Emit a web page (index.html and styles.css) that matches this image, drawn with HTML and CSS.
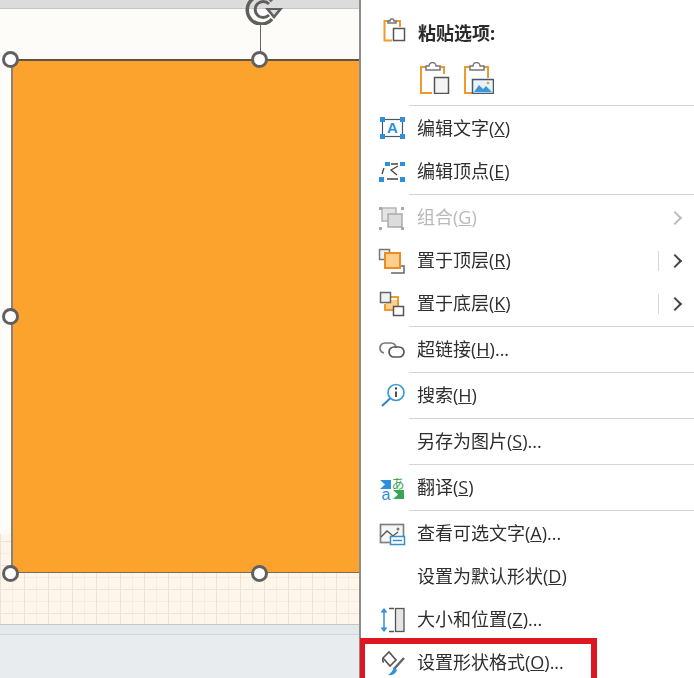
FILE: index.html
```html
<!DOCTYPE html>
<html>
    <head>
        <meta charset="UTF-8">
        <title>设置形状格式</title>
        <link rel="stylesheet" href="styles.css">
    </head>
    <body>
        <div class="canvas">
            <div class="top-strip"></div>
            <div class="slide">
                <div class="shape"></div>
            </div>
            <div class="workspace"></div>

            <svg class="rotate" width="42" height="30" viewBox="0 0 42 30">
                <path d="M28 6 A14 14 0 1 0 28 24" fill="none" stroke="#5f5f5f" stroke-width="3.500"/>
                <path d="M25 9 A8 8 0 1 0 25 20" fill="none" stroke="#5f5f5f" stroke-width="3"/>
                <path d="M21 13 L39 13 L30 24 Z" fill="#5f5f5f"/>
                <path d="M26 15 L34 15 L30 20 Z" fill="#ddd"/>
            </svg>
            <div class="stem"></div>
            <div class="handle h-tl"></div>
            <div class="handle h-tm"></div>
            <div class="handle h-ml"></div>
            <div class="handle h-bl"></div>
            <div class="handle h-bm"></div>
        </div>

        <div class="menu">
            <div class="paste-head">
                <svg class="icon" width="28" height="24" viewBox="0 0 28 24">
                    <path d="M14 3 H6.500 V22.500 H14" fill="none" stroke="#ee9a2c" stroke-width="2"/>
                    <path d="M18 3 H22 V9" fill="none" stroke="#ee9a2c" stroke-width="2"/>
                    <path d="M10 5 V3 H12 A2 2 0 0 1 16 3 H18 V5 Z" fill="#fff" stroke="#777" stroke-width="1.500"/>
                    <rect x="15.500" y="10.500" width="11" height="12" fill="#fff" stroke="#555" stroke-width="1.500"/>
                </svg>
                <span class="label label-bold">粘贴选项:</span>
            </div>
            <div class="paste-icons">
                <svg width="30" height="32" viewBox="0 0 30 32">
                    <path d="M6 5 H1 V31 H12" fill="none" stroke="#ee9a2c" stroke-width="2"/>
                    <path d="M20 5 H24 V12" fill="none" stroke="#ee9a2c" stroke-width="2"/>
                    <path d="M6 8 V4 H9 A3.500 3.500 0 0 1 16 4 H20 V8 Z" fill="#fff" stroke="#777" stroke-width="1.500"/>
                    <rect x="14.500" y="15.500" width="14" height="16" fill="#f4f4f4" stroke="#555" stroke-width="1.500"/>
                </svg>
                <svg width="30" height="32" viewBox="0 0 30 32">
                    <path d="M6 5 H1 V31 H9" fill="none" stroke="#ee9a2c" stroke-width="2"/>
                    <path d="M20 5 H24 V16" fill="none" stroke="#ee9a2c" stroke-width="2"/>
                    <path d="M6 8 V4 H9 A3.500 3.500 0 0 1 16 4 H20 V8 Z" fill="#fff" stroke="#777" stroke-width="1.500"/>
                    <rect x="8.500" y="17.500" width="21" height="14" fill="#e9f3fa" stroke="#44596b" stroke-width="1.500"/>
                    <path d="M10 30 L15 23 L19 27 L22 24 L28 30 Z" fill="#3f96d6"/>
                    <circle cx="24" cy="21" r="1.300" fill="#ee9a2c"/>
                </svg>
            </div>
            <div class="sep"></div>

            <div class="row">
                <svg class="icon" width="28" height="28" viewBox="0 0 28 28">
                    <rect x="4.500" y="4.500" width="20" height="17" fill="none" stroke="#46596a" stroke-width="1.200"/>
                    <g fill="#2f8fd8">
                        <rect x="2" y="2" width="5" height="5"/>
                        <rect x="22" y="2" width="5" height="5"/>
                        <rect x="2" y="19" width="5" height="5"/>
                        <rect x="22" y="19" width="5" height="5"/>
                    </g>
                    <text x="14.500" y="18" class="icon-a">A</text>
                </svg>
                <span class="label">编辑文字(<u>X</u>)</span>
            </div>
            <div class="row">
                <svg class="icon" width="28" height="28" viewBox="0 0 28 28">
                    <g fill="#2f8fd8">
                        <rect x="7" y="4" width="5" height="4"/>
                        <rect x="22" y="4" width="5" height="4"/>
                        <rect x="1" y="19" width="5" height="5"/>
                        <rect x="22" y="19" width="5" height="5"/>
                    </g>
                    <path d="M6 10 L4 16 M13 6 H20 M20 8 L13 12 L19 17 M9 21 H20" fill="none" stroke="#444" stroke-width="1.300"/>
                </svg>
                <span class="label">编辑顶点(<u>E</u>)</span>
            </div>
            <div class="sep"></div>

            <div class="row row-off">
                <svg class="icon" width="28" height="28" viewBox="0 0 28 28">
                    <rect x="4" y="4" width="14" height="13" fill="#e4e4e4" stroke="#b5b5b5" stroke-width="1.500"/>
                    <rect x="10" y="10" width="14" height="13" fill="#dcdcdc" stroke="#aaa" stroke-width="1.500"/>
                    <g fill="#a8a8a8">
                        <rect x="1" y="3" width="3" height="3"/>
                        <rect x="23" y="3" width="3" height="3"/>
                        <rect x="1" y="23" width="3" height="3"/>
                        <rect x="23" y="23" width="3" height="3"/>
                    </g>
                </svg>
                <span class="label">组合(<u>G</u>)</span>
                <span class="chevron"></span>
            </div>
            <div class="row">
                <svg class="icon" width="28" height="28" viewBox="0 0 28 28">
                    <rect x="1.500" y="2.500" width="10" height="10" fill="#f2f2f2" stroke="#777" stroke-width="1.500"/>
                    <path d="M20 19 H26 V26 H13" fill="none" stroke="#666" stroke-width="1.500"/>
                    <rect x="7" y="6" width="15" height="15" fill="#fbd08f" stroke="#ee8a1e" stroke-width="2"/>
                </svg>
                <span class="label">置于顶层(<u>R</u>)</span>
                <span class="split"></span>
                <span class="chevron"></span>
            </div>
            <div class="row">
                <svg class="icon" width="28" height="28" viewBox="0 0 28 28">
                    <path d="M13 7 H20 V17 M7 14 V20 H15" fill="none" stroke="#ee9a2c" stroke-width="2"/>
                    <rect x="8" y="10" width="11" height="9" fill="#fbd08f"/>
                    <rect x="2.500" y="2.500" width="10" height="10" fill="#f2f2f2" stroke="#666" stroke-width="1.500"/>
                    <rect x="15.500" y="16.500" width="10" height="9" fill="#fff" stroke="#555" stroke-width="1.500"/>
                </svg>
                <span class="label">置于底层(<u>K</u>)</span>
                <span class="split"></span>
                <span class="chevron"></span>
            </div>
            <div class="sep"></div>

            <div class="row">
                <svg class="icon" width="28" height="28" viewBox="0 0 28 28">
                    <path d="M6 17 Q2 16 2 12 A5 5 0 0 1 7 7 H13 A5 5 0 0 1 18 12" fill="none" stroke="#777" stroke-width="1.700"/>
                    <rect x="11" y="11" width="15" height="10" rx="5" fill="none" stroke="#555" stroke-width="1.700"/>
                </svg>
                <span class="label">超链接(<u>H</u>)...</span>
            </div>
            <div class="sep"></div>

            <div class="row">
                <svg class="icon" width="28" height="28" viewBox="0 0 28 28">
                    <circle cx="18" cy="10.500" r="8" fill="#fff" stroke="#3d9bd4" stroke-width="1.700"/>
                    <path d="M12 16.500 L4 24" stroke="#2d86c4" stroke-width="2"/>
                    <path d="M18 9.500 V15" stroke="#333" stroke-width="1.700"/>
                    <rect x="17" y="5.500" width="2" height="2" fill="#333"/>
                </svg>
                <span class="label">搜索(<u>H</u>)</span>
            </div>
            <div class="sep"></div>

            <div class="row">
                <span class="icon icon-blank"></span>
                <span class="label">另存为图片(<u>S</u>)...</span>
            </div>
            <div class="sep"></div>

            <div class="row">
                <svg class="icon" width="28" height="28" viewBox="0 0 28 28">
                    <path d="M2 6 H13 V15 H2 L7 10.500 Z" fill="#2f8fd8"/>
                    <text x="8" y="26" class="icon-tr-a">a</text>
                    <text x="20" y="14" class="icon-tr-b">あ</text>
                    <path d="M26 16 V25 H15 L20 20.500 L15 16 Z" fill="#3aa655"/>
                </svg>
                <span class="label">翻译(<u>S</u>)</span>
            </div>
            <div class="sep"></div>

            <div class="row">
                <svg class="icon" width="28" height="28" viewBox="0 0 28 28">
                    <rect x="2.500" y="4.500" width="23" height="18" fill="#f6f6f6" stroke="#808080" stroke-width="1.700"/>
                    <path d="M3 17 L9 11 L15 16 L20 12" fill="none" stroke="#555" stroke-width="1.300"/>
                    <circle cx="20" cy="9" r="1.500" fill="#777"/>
                    <rect x="12.500" y="16.500" width="14" height="8" fill="#fff" stroke="#3a8fcb" stroke-width="1.500"/>
                    <path d="M15 20.500 H24" stroke="#3a8fcb" stroke-width="1.500"/>
                </svg>
                <span class="label">查看可选文字(<u>A</u>)...</span>
            </div>
            <div class="row">
                <span class="icon icon-blank"></span>
                <span class="label">设置为默认形状(<u>D</u>)</span>
            </div>
            <div class="row">
                <svg class="icon" width="28" height="28" viewBox="0 0 28 28">
                    <path d="M6 5 V23" stroke="#2f8fd8" stroke-width="1.500"/>
                    <path d="M2.500 6.500 L6 2 L9.500 6.500 Z M2.500 21.500 L6 26 L9.500 21.500 Z" fill="#2f8fd8"/>
                    <rect x="17.500" y="2.500" width="8.500" height="23" fill="#e6e6e6" stroke="#555" stroke-width="1.300"/>
                    <path d="M11 2.500 H16 M11 25.500 H16" stroke="#555" stroke-width="1.300"/>
                </svg>
                <span class="label">大小和位置(<u>Z</u>)...</span>
            </div>
            <div class="row">
                <svg class="icon" width="28" height="28" viewBox="0 0 28 28">
                    <path d="M5 9 L11 3 L18 11 L12 17 Z" fill="#fff" stroke="#555" stroke-width="1.600"/>
                    <path d="M5 9 Q4 13 6 13" fill="none" stroke="#555" stroke-width="1.600"/>
                    <path d="M26 9 L16 20" stroke="#666" stroke-width="2.500"/>
                    <path d="M16 18 L19 21 Q17 27 10 26 Q14 24 16 18 Z" fill="#2f8fd8"/>
                </svg>
                <span class="label">设置形状格式(<u>O</u>)...</span>
            </div>
        </div>

        <div class="red-box"></div>
    </body>
</html>
```

FILE: styles.css
```css
html, body {
    height: 100%;
}

body {
    margin: 0;
    height: 678px;
    overflow: hidden;
    display: flex;
    position: relative;
    background: #fff;
    font-family: "Open Sans", "Noto Sans CJK SC", sans-serif;
    color: #2e2e2e;
}

/* left side: slide with the selected shape */
.canvas {
    width: 359px;
    flex: none;
    display: flex;
    flex-direction: column;
    position: relative;
    overflow: hidden;
}

.top-strip {
    height: 8px;
    flex: none;
    background: #dcdcdc;
    border-bottom: 1px solid #c6c6c6;
}

.slide {
    height: 515px;
    padding-top: 50px;
    padding-left: 11px;
    padding-bottom: 50px;
    flex: none;
    background:
        linear-gradient(#fdfcf8, #fdfcf8) top left / 100% 525px no-repeat,
        linear-gradient(90deg, #efe3d8 1px, transparent 1px) 0 0 / 24px 24px,
        linear-gradient(#efe3d8 1px, transparent 1px) 0 4px / 24px 24px,
        linear-gradient(90deg, #f8ecdf 1px, transparent 1px) 0 0 / 12px 12px,
        linear-gradient(#f8ecdf 1px, transparent 1px) 0 4px / 12px 12px,
        #fef6ea;
    border-bottom: 1px solid #c3c7cc;
}

.shape {
    height: 514px;
    box-sizing: border-box;
    background: #fca32e;
    border-top: 2px solid #5f5247;
    border-left: 2px solid #8a8178;
    border-bottom: 1px solid #7a6a55;
}

.workspace {
    flex: 1;
    background: #e8ecef;
    border-top: 9px solid #e4e9ec;
    box-shadow: inset 0 1px 0 #cfd4d9;
}

.handle {
    position: absolute;
    width: 11px;
    height: 11px;
    background: #fff;
    border: 3px solid #606060;
    border-radius: 50%;
}

.h-tl { left: 2px; top: 51px; }
.h-tm { left: 251px; top: 51px; }
.h-ml { left: 2px; top: 308px; }
.h-bl { left: 2px; top: 565px; }
.h-bm { left: 251px; top: 565px; }

.rotate {
    position: absolute;
    left: 244px;
    top: -5px;
}

.stem {
    position: absolute;
    left: 260px;
    top: 24px;
    width: 1px;
    height: 28px;
    background: #666;
}

/* right side: context menu */
.menu {
    flex: 1;
    border-left: 2px solid #8c8c8c;
    padding-top: 12px;
    display: flex;
    flex-direction: column;
    background: #fff;
}

.paste-head {
    height: 43px;
    flex: none;
    display: flex;
    align-items: center;
    gap: 12px;
    padding-left: 17px;
}

.paste-head .icon {
    align-self: flex-start;
    margin-top: 6px;
}

.paste-icons {
    height: 49px;
    flex: none;
    display: flex;
    gap: 14px;
    padding-left: 59px;
    padding-top: 7px;
    box-sizing: border-box;
}

.sep {
    height: 1px;
    flex: none;
    margin: 1px 0 1px 48px;
    background: #d4d4d4;
}

.row {
    height: 43px;
    flex: none;
    display: flex;
    align-items: center;
    gap: 11px;
    padding-left: 17px;
}

.icon {
    flex: none;
}

.icon-blank {
    width: 28px;
    height: 28px;
}

.label {
    font-size: 18px;
    line-height: 24px;
    padding-bottom: 2px;
    white-space: nowrap;
    filter: blur(0.3px);
}

.label-bold {
    font-weight: bold;
    color: #2a2a2a;
}

.row-off .label {
    color: #b9b9b9;
}

.split {
    width: 1px;
    height: 20px;
    background: #d8d8d8;
    margin-left: auto;
}

.chevron {
    width: 10px;
    height: 10px;
    box-sizing: border-box;
    border-top: 2px solid #444;
    border-right: 2px solid #444;
    transform: rotate(45deg);
    margin-left: 0;
    margin-right: 14px;
}

.row-off .chevron {
    margin-left: auto;
    border-color: #bbb;
}

.icon-a {
    font-family: "Liberation Sans", sans-serif;
    font-size: 15px;
    font-weight: bold;
    fill: #2f8fd8;
    text-anchor: middle;
}

.icon-tr-a {
    font-family: "Liberation Sans", sans-serif;
    font-size: 16px;
    fill: #2f8fd8;
    text-anchor: middle;
}

.icon-tr-b {
    font-family: "Noto Sans CJK JP", sans-serif;
    font-size: 13px;
    fill: #3aa655;
    text-anchor: middle;
}

.red-box {
    position: absolute;
    left: 360px;
    top: 638px;
    width: 226px;
    height: 50px;
    border: solid #dd1820;
    border-width: 6px;
    border-left-width: 5px;
}
```
